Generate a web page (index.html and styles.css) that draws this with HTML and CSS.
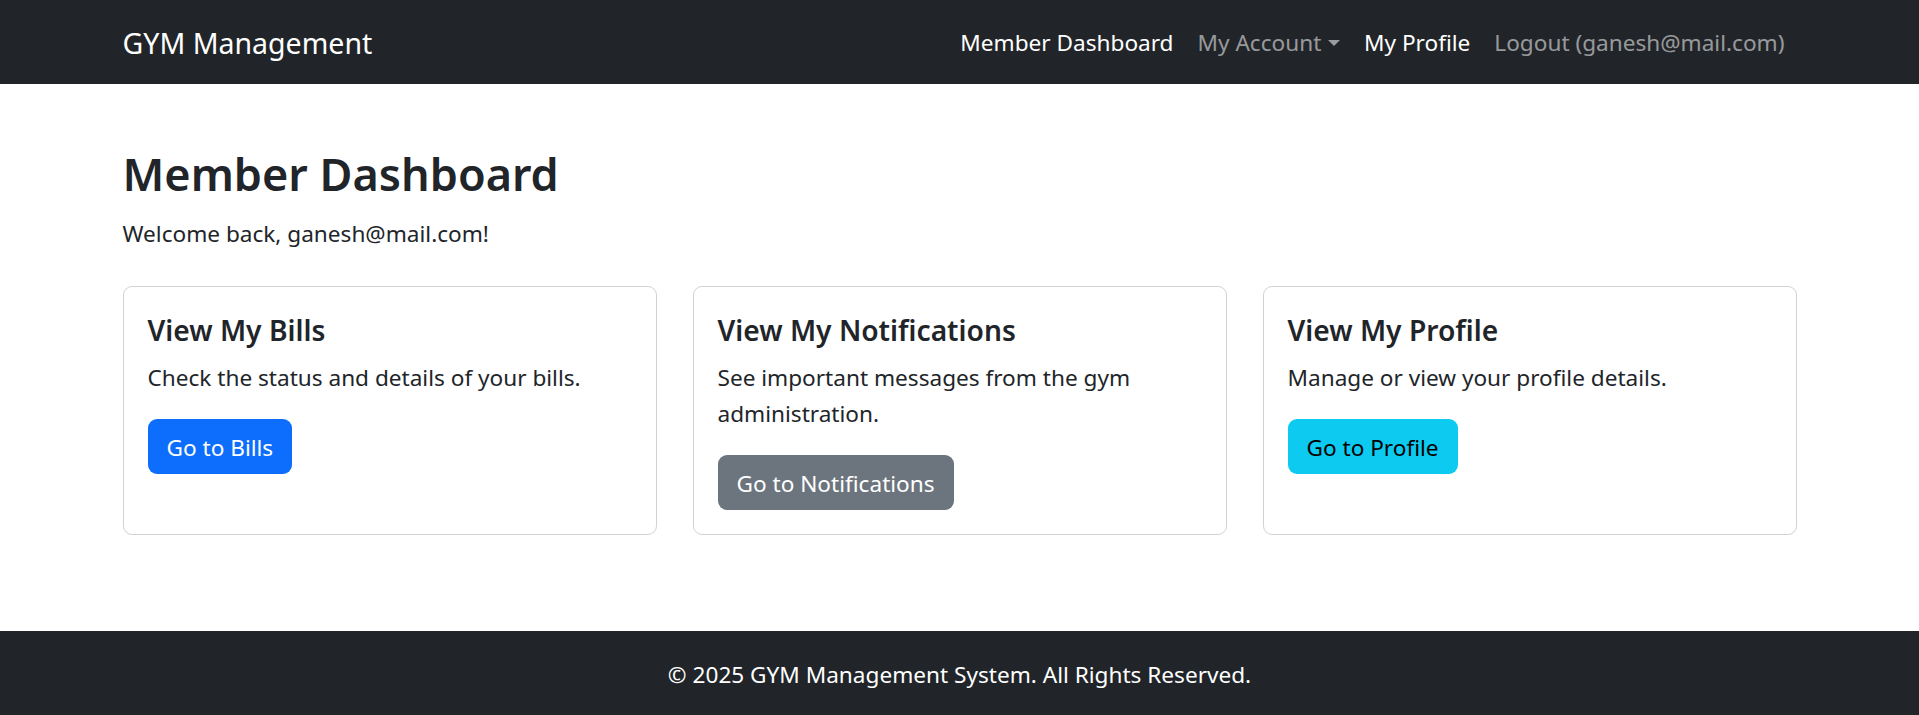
FILE: index.html
```html
<!DOCTYPE html>
<html lang="en">
<head>
<meta charset="utf-8">
<title>Member Dashboard - GYM Management</title>
<link rel="stylesheet" href="styles.css">
</head>
<body>
<nav class="navbar">
  <div class="container nav-inner">
    <a class="brand" href="#">GYM Management</a>
    <ul class="nav-links">
      <li><a class="nav-link active" href="#">Member Dashboard</a></li>
      <li><a class="nav-link dropdown" href="#">My Account</a></li>
      <li><a class="nav-link active" href="#">My Profile</a></li>
      <li><a class="nav-link" href="#">Logout (ganesh@mail.com)</a></li>
    </ul>
  </div>
</nav>
<main class="main">
  <div class="container">
    <h1 class="page-title">Member Dashboard</h1>
    <p class="welcome">Welcome back, ganesh@mail.com!</p>
    <div class="cards">
      <div class="card">
        <h5 class="card-title">View My Bills</h5>
        <p class="card-text">Check the status and details of your bills.</p>
        <a class="btn btn-primary" href="#">Go to Bills</a>
      </div>
      <div class="card">
        <h5 class="card-title">View My Notifications</h5>
        <p class="card-text">See important messages from the gym administration.</p>
        <a class="btn btn-secondary" href="#">Go to Notifications</a>
      </div>
      <div class="card">
        <h5 class="card-title">View My Profile</h5>
        <p class="card-text">Manage or view your profile details.</p>
        <a class="btn btn-info" href="#">Go to Profile</a>
      </div>
    </div>
  </div>
</main>
<footer class="footer">
  <p class="footer-text">&copy; 2025 GYM Management System. All Rights Reserved.</p>
</footer>
</body>
</html>
```
FILE: styles.css
```css
* { box-sizing: border-box; }
html, body { margin: 0; }
body {
  font-family: "Noto Sans", "Open Sans", sans-serif;
  font-size: 22.6px;
  line-height: 36px;
  color: #212529;
  background: #fff;
  display: flex;
  flex-direction: column;
  min-height: 100vh;
}
.container {
  width: 100%;
  max-width: 1710px;
  margin: 0 auto;
  padding: 0 18px;
}
.navbar {
  background: #212529;
  padding: 12px 0;
}
.nav-inner {
  display: flex;
  align-items: center;
  justify-content: space-between;
}
.brand {
  color: #fff;
  font-size: 28.5px;
  line-height: 45px;
  padding: 9px 0 6px;
  text-decoration: none;
}
.nav-links {
  display: flex;
  list-style: none;
  margin: 0;
  padding: 0;
}
.nav-link {
  display: block;
  padding: 13px 12px 11px;
  line-height: 36px;
  color: rgba(255, 255, 255, 0.55);
  text-decoration: none;
}
.nav-link.active { color: #fff; }
.dropdown::after {
  content: "";
  display: inline-block;
  margin-left: 0.3em;
  vertical-align: 0.22em;
  border-top: 0.3em solid;
  border-right: 0.3em solid transparent;
  border-left: 0.3em solid transparent;
}
.main {
  flex: 1;
  padding-top: 61px;
}
.page-title {
  font-size: 45px;
  font-weight: 600;
  line-height: 58px;
  margin: 0 0 12px;
}
.welcome {
  margin: 0 0 34px;
  padding-top: 1px;
}
.cards {
  display: grid;
  grid-template-columns: repeat(3, 1fr);
  gap: 36px;
}
.card {
  border: 1px solid rgba(0, 0, 0, 0.175);
  border-radius: 9px;
  padding: 24px;
}
.card-title {
  font-size: 28.2px;
  font-weight: 600;
  line-height: 36px;
  margin: 0 0 12px;
  padding-top: 1px;
}
.card-text {
  margin: 0 0 23px;
}
.btn {
  display: inline-block;
  padding: 10px 18px 8px;
  border: 1px solid transparent;
  border-radius: 9px;
  font-size: 22.6px;
  line-height: 35px;
  text-decoration: none;
}
.btn-primary { background: #0d6efd; color: #fff; }
.btn-secondary { background: #6c757d; color: #fff; }
.btn-info { background: #0dcaf0; color: #000; }
.footer {
  background: #212529;
  color: #fff;
  text-align: center;
  padding: 26px 0 22px;
}
.footer-text { margin: 0; }
```
